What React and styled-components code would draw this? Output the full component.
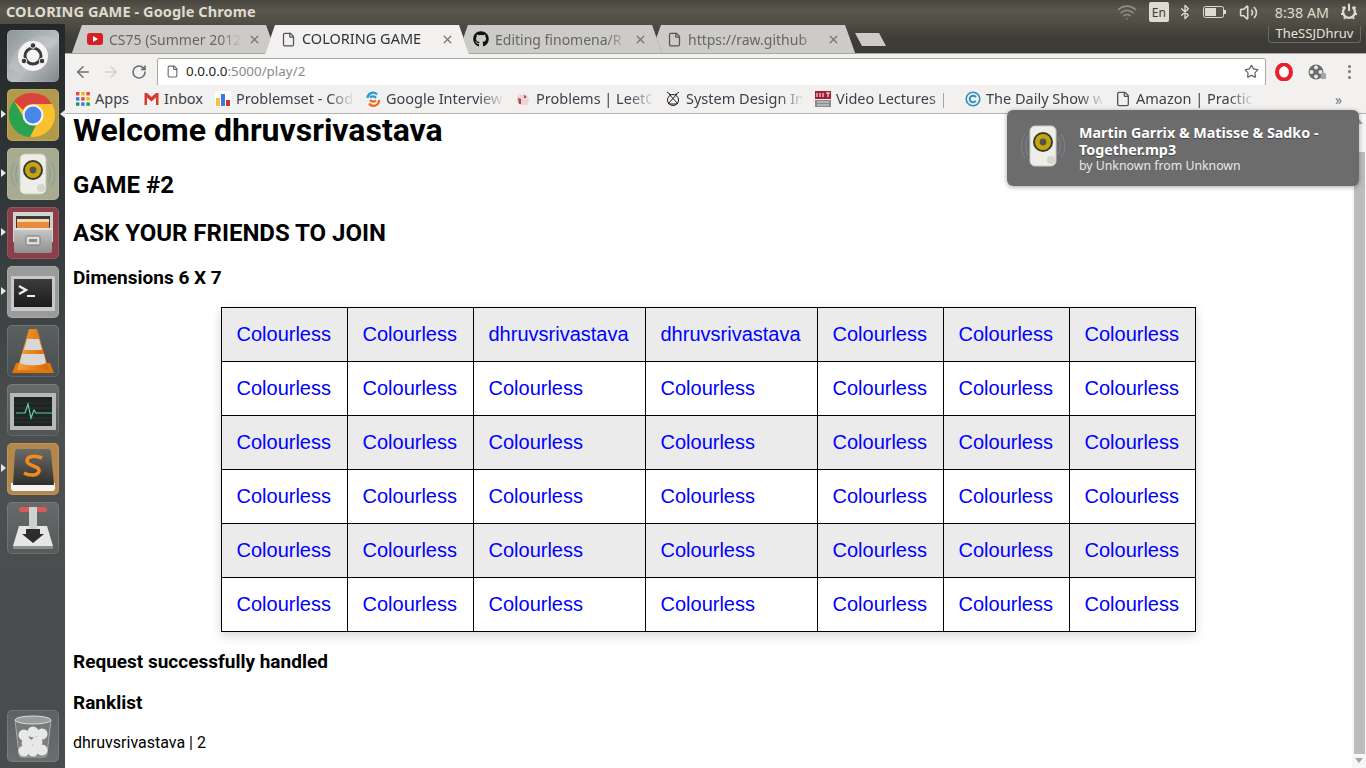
import React from "react";
import styled, { createGlobalStyle } from "styled-components";
import { ArrowLeft, ArrowRight, RotateCw, Star, File, Wifi, Bluetooth, Volume2, X } from "lucide-react";
import { FaGithub } from "react-icons/fa";

const UI_FONT = `"Noto Sans", "Open Sans", sans-serif`;

const GlobalStyle = createGlobalStyle`
  html, body {
    margin: 0;
    padding: 0;
    overflow: hidden;
    background: #fff;
  }
`;

const Screen = styled.div`
  position: relative;
  width: 1366px;
  height: 768px;
  overflow: hidden;
  display: flex;
  flex-direction: column;
  font-family: Roboto, sans-serif;
`;

const TopBar = styled.div`
  height: 24px;
  flex: none;
  display: flex;
  align-items: center;
  padding: 0 8px 0 6px;
  background: linear-gradient(#47453e, #5a574c 10px, #4f4c43);
  color: #dfdbd2;
  font-family: ${UI_FONT};
`;

const WindowTitle = styled.div`
  font-size: 14.5px;
  font-weight: 700;
  letter-spacing: 0.1px;
  flex: 1;
  margin-bottom: 2px;
`;

const Tray = styled.div`
  display: flex;
  align-items: center;
  font-size: 14.3px;
`;

const TraySlot = styled.div`
  display: flex;
  align-items: center;
  margin-left: ${(p) => p.$gap || 0}px;
`;

const LangBox = styled.div`
  width: 20px;
  height: 20px;
  border-radius: 2px;
  background: #dfdbd2;
  color: #3c3b37;
  font-size: 12px;
  display: flex;
  align-items: center;
  justify-content: center;
`;

const Desktop = styled.div`
  flex: 1;
  display: flex;
  min-height: 0;
`;

const Dock = styled.div`
  width: 65px;
  flex: none;
  box-sizing: border-box;
  padding: 6px 0;
  display: flex;
  flex-direction: column;
  align-items: center;
  gap: 7px;
  background: linear-gradient(#24282a, #33383a 25%, #4b4f50 55%, #484c4d 100%);
`;

const Tile = styled.div`
  position: relative;
  width: 52px;
  height: 52px;
  flex: none;
  border-radius: 5px;
  background: ${(p) => p.$bg};
  box-shadow: inset 0 0 0 1px rgba(255, 255, 255, 0.12);
  margin-top: ${(p) => (p.$bottom ? "auto" : "0")};
`;

const Pip = styled.span`
  position: absolute;
  top: 21px;
  left: ${(p) => (p.$side === "right" ? "53px" : "-6px")};
  width: 0;
  height: 0;
  border-top: 4px solid transparent;
  border-bottom: 4px solid transparent;
  ${(p) =>
    p.$side === "right"
      ? "border-right: 5px solid #e8e8e8;"
      : "border-left: 5px solid #e8e8e8;"}
`;

const Main = styled.div`
  flex: 1;
  min-width: 0;
  display: flex;
  flex-direction: column;
`;

const TabStrip = styled.div`
  height: 29px;
  flex: none;
  display: flex;
  align-items: flex-end;
  padding-left: 7px;
  background: linear-gradient(#4f4c43, #3e3d38 14px, #3c3b37);
  font-family: ${UI_FONT};
  position: relative;
`;

const TabEdge = styled.div`
  width: 204px;
  height: ${(p) => (p.$active ? 29 : 28)}px;
  margin-right: -11px;
  margin-bottom: ${(p) => (p.$active ? -1 : 0)}px;
  flex: none;
  position: relative;
  z-index: ${(p) => p.$z};
  filter: drop-shadow(0 0 0.6px #77756f);
`;

const TabBody = styled.div`
  height: 100%;
  box-sizing: border-box;
  padding: 0 15px 0 ${(p) => p.$pad}px;
  display: flex;
  align-items: center;
  gap: 6px;
  font-size: ${(p) => (p.$active ? 14.5 : 14)}px;
  color: ${(p) => (p.$active ? "#333" : "#666")};
  background: ${(p) => (p.$active ? "#f2f1f0" : "#cdcbc8")};
  clip-path: polygon(0 100%, 10px 0, calc(100% - 10px) 0, 100% 100%);
`;

const TabLabel = styled.span`
  flex: 1;
  min-width: 0;
  overflow: hidden;
  white-space: nowrap;
  margin-bottom: ${(p) => (p.$fade ? 0 : 3)}px;
  ${(p) =>
    p.$fade &&
    "mask-image: linear-gradient(to right, #000 calc(100% - 22px), transparent);"}
`;

const NewTab = styled.div`
  width: 31px;
  height: 13px;
  margin: 0 0 7px 11px;
  flex: none;
  background: #cdcbc8;
  clip-path: polygon(0 0, 24px 0, 100% 100%, 7px 100%);
`;

const UserBadge = styled.div`
  position: absolute;
  top: 2px;
  right: 5px;
  width: 93px;
  height: 17px;
  box-sizing: border-box;
  border: 1px solid #6a6963;
  border-top: none;
  border-radius: 0 0 4px 4px;
  color: #e6e3dc;
  font-size: 13px;
  line-height: 15px;
  text-align: center;
`;

const Toolbar = styled.div`
  height: 32px;
  flex: none;
  box-sizing: border-box;
  display: flex;
  align-items: center;
  padding: 4px 0 0 4px;
  background: #f2f1f0;
  border-top: 1px solid #a8a6a2;
`;

const NavButton = styled.div`
  width: 28px;
  height: 24px;
  display: flex;
  align-items: center;
  justify-content: center;
  flex: none;
  color: ${(p) => (p.$off ? "#cfcfcf" : "#6e6e6e")};
`;

const Omnibox = styled.div`
  flex: 1;
  height: 28px;
  box-sizing: border-box;
  margin-left: 4px;
  background: #fff;
  border: 1px solid #aaa9a5;
  border-radius: 2px;
  display: flex;
  align-items: center;
  padding: 0 6px 0 8px;
  gap: 7px;
  font-family: ${UI_FONT};
  font-size: 13.4px;
  color: #8a8a8a;
  b {
    font-weight: 400;
    color: #222;
  }
`;

const Url = styled.div`
  flex: 1;
  margin-bottom: 2px;
`;

const ExtensionTray = styled.div`
  width: 100px;
  flex: none;
  display: flex;
  align-items: center;
  gap: 15px;
  padding-left: 9px;
  box-sizing: border-box;
`;

const Dots = styled.div`
  display: flex;
  flex-direction: column;
  gap: 2.5px;
  margin-left: 7px;
  span {
    width: 3px;
    height: 3px;
    border-radius: 50%;
    background: #777;
  }
`;

const BookmarkBar = styled.div`
  height: 29px;
  flex: none;
  box-sizing: border-box;
  display: flex;
  align-items: center;
  gap: 13px;
  padding: 0 0 0 11px;
  background: #f2f1f0;
  border-bottom: 1px solid #b5b4b0;
  font-family: ${UI_FONT};
  font-size: 14.5px;
  color: #3c4048;
`;

const Bookmark = styled.div`
  display: flex;
  align-items: center;
  gap: 5px;
  flex: none;
`;

const BookmarkLabel = styled.span`
  display: block;
  width: ${(p) => (p.$w ? `${p.$w}px` : "116px")};
  margin-bottom: 2px;
  white-space: nowrap;
  ${(p) =>
    !p.$w && "mask-image: linear-gradient(to right, #000 80%, rgba(0,0,0,0.1));"}
`;

const Chevrons = styled.div`
  margin-left: 70px;
  font-size: 14px;
  color: #777;
`;

const PageRow = styled.div`
  flex: 1;
  min-height: 0;
  display: flex;
  background: #fff;
`;

const Page = styled.div`
  flex: 1;
  min-width: 0;
  box-sizing: border-box;
  padding: 0 8px;
  display: flow-root;
  color: #000;
`;

const Welcome = styled.h1`
  font-size: 32px;
  line-height: 33px;
  font-weight: 700;
  margin: 0 0 24.4px;
`;

const Heading = styled.h2`
  font-size: 24px;
  font-weight: 700;
  margin: 19.5px 0;
`;

const SubHeading = styled.h3`
  font-size: 19px;
  font-weight: 700;
  margin: 18px 0;
`;

const Plain = styled.p`
  font-size: 16px;
  margin: 19px 0;
`;

const Board = styled.table`
  border-collapse: collapse;
  table-layout: fixed;
  width: 974px;
  margin: 18px auto 0;
  font-family: "Liberation Sans", Arial, sans-serif;
  font-size: 20px;
  box-shadow: 0 4px 10px rgba(0, 0, 0, 0.16);
`;

const Column = styled.col`
  width: ${(p) => p.$w}px;
`;

const Row = styled.tr`
  background: ${(p) => (p.$even ? "#ebebeb" : "#fff")};
`;

const Cell = styled.td`
  border: 1px solid #000;
  padding: 0 0 0 14.5px;
  height: 54px;
  box-sizing: border-box;
  white-space: nowrap;
`;

const CellLink = styled.a`
  color: #00f;
  text-decoration: none;
`;

const Scrollbar = styled.div`
  width: 14px;
  flex: none;
  background: #f7f7f7;
  display: flex;
  flex-direction: column;
  align-items: center;
  padding: 5px 0;
  box-sizing: border-box;
`;

const ScrollThumb = styled.div`
  width: 11px;
  flex: 1;
  margin: 28px 0 4px;
  background: #bdbdbd;
`;

const ScrollArrow = styled.span`
  width: 0;
  height: 0;
  border-left: 4px solid transparent;
  border-right: 4px solid transparent;
  ${(p) =>
    p.$down ? "border-top: 5px solid #a5a5a5;" : "border-bottom: 5px solid #a5a5a5;"}
`;

const Notification = styled.div`
  position: absolute;
  left: 1007px;
  top: 110px;
  width: 352px;
  height: 76px;
  box-sizing: border-box;
  padding: 14px 10px 0 72px;
  border-radius: 6px;
  background: rgba(102, 102, 102, 0.96);
  box-shadow: 0 1px 5px rgba(0, 0, 0, 0.35);
  color: #fff;
  font-family: ${UI_FONT};
`;

const NotificationIcon = styled.div`
  position: absolute;
  left: 10px;
  top: 10px;
  width: 52px;
  height: 52px;
`;

const NotificationTitle = styled.div`
  font-size: 14.3px;
  font-weight: 700;
  line-height: 17px;
  text-shadow: 0 1px 1px rgba(0, 0, 0, 0.4);
`;

const NotificationSub = styled.div`
  font-size: 12.3px;
  line-height: 15px;
  color: #e8e8e8;
`;

const UbuntuIcon = () => (
  <svg width="52" height="52" viewBox="0 0 52 52">
    <path d="M6 40C14 10 38 6 48 16" fill="none" stroke="#fff" strokeOpacity=".12" strokeWidth="10" />
    <circle cx="26" cy="26" r="15" fill="#f4f4f4" />
    <circle cx="26" cy="26" r="8" fill="none" stroke="#3a3a3a" strokeWidth="3" />
    <circle cx="26" cy="15.5" r="2.8" fill="#3a3a3a" stroke="#f4f4f4" />
    <circle cx="17" cy="31" r="2.8" fill="#3a3a3a" stroke="#f4f4f4" />
    <circle cx="35" cy="31" r="2.8" fill="#3a3a3a" stroke="#f4f4f4" />
  </svg>
);

const ChromeIcon = () => (
  <svg width="52" height="52" viewBox="0 0 52 52">
    <circle cx="26" cy="26" r="22" fill="#fbc02d" />
    <path d="M26 4a22 22 0 0 1 19 11H26a11 11 0 0 0-10 6L7 12A22 22 0 0 1 26 4z" fill="#d9453a" />
    <path d="M7 12l10 17a11 11 0 0 0 12 7l-6 12A22 22 0 0 1 7 12z" fill="#2aa24f" />
    <circle cx="26" cy="26" r="10.5" fill="#f4f4f4" />
    <circle cx="26" cy="26" r="8.4" fill="#4a86e8" />
  </svg>
);

const SpeakerIcon = () => (
  <svg width="52" height="52" viewBox="0 0 52 52">
    <path d="M8 14c-5 7-5 17 0 24M44 14c5 7 5 17 0 24M11 17c-3 5-3 13 0 18M41 17c3 5 3 13 0 18" fill="none" stroke="#7d8fa6" strokeOpacity=".7" />
    <rect x="13" y="6" width="26" height="40" rx="5" fill="#eeeee9" stroke="#c9c9c2" />
    <circle cx="26" cy="22" r="10" fill="#3a3a30" />
    <circle cx="26" cy="22" r="8" fill="#c5a50f" />
    <circle cx="26" cy="22" r="3.4" fill="#55544a" />
    <circle cx="34" cy="40" r="4" fill="#d6d6d0" />
  </svg>
);

const FilesIcon = () => (
  <svg width="52" height="52" viewBox="0 0 52 52">
    <defs>
      <linearGradient id="drawer" x1="0" y1="0" x2="0" y2="1">
        <stop offset="0" stopColor="#c9c9c7" />
        <stop offset="1" stopColor="#8f8f8d" />
      </linearGradient>
    </defs>
    <rect x="6" y="5" width="40" height="30" fill="#d2d2d0" />
    <rect x="9" y="9" width="34" height="16" fill="#3a3a38" />
    <rect x="10" y="12" width="32" height="3" fill="#f2d9a8" />
    <rect x="10" y="15" width="32" height="6" fill="#e98b3c" />
    <rect x="7" y="21" width="38" height="25" rx="2" fill="url(#drawer)" />
    <rect x="7" y="21" width="38" height="2" fill="#e2e2e0" />
    <rect x="19" y="29" width="14" height="9" rx="1.5" fill="#dededc" stroke="#75756f" />
    <rect x="22" y="32" width="8" height="3" fill="#8a8a86" />
  </svg>
);

const TerminalIcon = () => (
  <svg width="52" height="52" viewBox="0 0 52 52">
    <defs>
      <linearGradient id="term" x1="0" y1="0" x2="0" y2="1">
        <stop offset="0" stopColor="#3c3c3c" />
        <stop offset="1" stopColor="#1c1c1c" />
      </linearGradient>
    </defs>
    <rect x="4" y="10" width="44" height="35" rx="1" fill="#c8c8c8" />
    <rect x="7" y="13" width="38" height="28" fill="url(#term)" />
    <path d="M12 20l7 4-7 4" fill="none" stroke="#eee" strokeWidth="2.4" />
    <rect x="20" y="29" width="8" height="2" fill="#eee" />
  </svg>
);

const VlcIcon = () => (
  <svg width="52" height="52" viewBox="0 0 52 52">
    <defs>
      <linearGradient id="cone" x1="0" y1="0" x2="1" y2="0">
        <stop offset="0" stopColor="#f7a23c" />
        <stop offset="1" stopColor="#d9680a" />
      </linearGradient>
    </defs>
    <path d="M9 38h34l4 10H5z" fill="#e2760d" />
    <path d="M22 4h8l12 41H10z" fill="url(#cone)" />
    <path d="M20 14h12l3 11H17z" fill="#d8d8d8" />
    <path d="M15 29h22l2 9c-5 3-21 3-26 0z" fill="#d8d8d8" />
  </svg>
);

const MonitorIcon = () => (
  <svg width="52" height="52" viewBox="0 0 52 52">
    <rect x="3" y="9" width="46" height="37" fill="#b8b8b6" />
    <rect x="7" y="13" width="38" height="29" fill="#1e2422" />
    <path d="M7 19h38M7 24h38M7 34h38M7 38h38" stroke="#2e3432" />
    <path d="M9 29h9l3-9 3 14 3-8 2 3h17" fill="none" stroke="#5fd0b0" strokeWidth="1.2" />
  </svg>
);

const SublimeIcon = () => (
  <svg width="52" height="52" viewBox="0 0 52 52">
    <defs>
      <linearGradient id="plate" x1="0" y1="0" x2="0" y2="1">
        <stop offset="0" stopColor="#6a6a68" />
        <stop offset="1" stopColor="#2f2f2e" />
      </linearGradient>
    </defs>
    <path d="M4 40h44v5a3 3 0 0 1-3 3H7a3 3 0 0 1-3-3z" fill="#f4f4f2" />
    <path d="M11 6h30a3 3 0 0 1 3 3l3 33H6l2-33a3 3 0 0 1 3-3z" fill="url(#plate)" />
    <path d="M35 15c-7-3-15-2-15 3s13 5 12 10-9 5-15 2" fill="none" stroke="#f28c1e" strokeWidth="3.6" />
  </svg>
);

const InstallIcon = () => (
  <svg width="52" height="52" viewBox="0 0 52 52">
    <rect x="12" y="5" width="28" height="5" rx="2.5" fill="#d85a5c" />
    <path d="M12 24h28l6 20H6z" fill="#e6e6e4" />
    <path d="M6 44h40v3H6z" fill="#8c8c8a" />
    <rect x="22" y="5" width="8" height="24" fill="#d0d0ce" />
    <path d="M19 27h14v5h4l-11 9-11-9h4z" fill="#2c2c2c" />
  </svg>
);

const TrashIcon = () => (
  <svg width="52" height="52" viewBox="0 0 52 52">
    <path d="M8 10l4 34a3 3 0 0 0 3 3h22a3 3 0 0 0 3-3l4-34z" fill="#fff" fillOpacity=".14" stroke="#aaa" />
    <ellipse cx="26" cy="10" rx="18" ry="4" fill="#9a9d9d" stroke="#dcdcdc" />
    {[[17, 25], [26, 22], [35, 24], [20, 33], [30, 32], [17, 41], [26, 41], [35, 40]].map(([x, y]) => (
      <circle key={x * y} cx={x} cy={y} r="5.5" fill="#e8e8e8" />
    ))}
  </svg>
);

const dockItems = [
  { bg: "linear-gradient(135deg,#8d9496,#b9bfc0 55%,#7e8587)", icon: UbuntuIcon },
  { bg: "#b09a4c", icon: ChromeIcon, pips: ["left", "right"] },
  { bg: "#a7ab90", icon: SpeakerIcon, pips: ["left"] },
  { bg: "#8c3e4a", icon: FilesIcon, pips: ["left"] },
  { bg: "#9a9c9c", icon: TerminalIcon, pips: ["left"] },
  { bg: "linear-gradient(#5b6060,#4a4e4f)", icon: VlcIcon },
  { bg: "linear-gradient(#666b6c,#505455)", icon: MonitorIcon },
  { bg: "#b4874c", icon: SublimeIcon, pips: ["left"] },
  { bg: "linear-gradient(#666a6b,#565a5b)", icon: InstallIcon },
];

const GearPower = () => (
  <svg width="18" height="18" viewBox="0 0 18 18" fill="none" stroke="#dfdbd2">
    <path d="M9 1v7" strokeWidth="2" />
    <path d="M5.5 4a6 6 0 1 0 7 0" strokeWidth="2.4" />
    <path d="M9 0.8v2M2.4 4l1.6 1M15.6 4L14 5M1 11h2M15 11h2M4 16l1-1.5M14 16l-1-1.5" strokeWidth="2" />
  </svg>
);

const Battery = () => (
  <svg width="24" height="14" viewBox="0 0 24 14">
    <rect x="0.5" y="1.5" width="20" height="11" rx="2" fill="none" stroke="#dfdbd2" />
    <rect x="2" y="3" width="11" height="8" fill="#dfdbd2" />
    <rect x="21" y="5" width="2" height="4" fill="#dfdbd2" />
  </svg>
);

const Youtube = () => (
  <svg width="16" height="12" viewBox="0 0 16 12" style={{ flex: "none" }}>
    <rect width="16" height="12" rx="3" fill="#d81f26" />
    <path d="M6 3l5 3-5 3z" fill="#fff" />
  </svg>
);

const AppsGrid = () => (
  <svg width="14" height="14" viewBox="0 0 14 14">
    {["#e8453c", "#f4b400", "#e8453c", "#3b78e7", "#e8453c", "#f4b400", "#0f9d58", "#3b78e7", "#0f9d58"].map((c, i) => (
      <rect key={i} x={(i % 3) * 5.2} y={Math.floor(i / 3) * 5.2} width="3.4" height="3.4" fill={c} />
    ))}
  </svg>
);

const Gmail = () => (
  <svg width="15" height="12" viewBox="0 0 14 12">
    <path d="M0 0h2.500L7 4l4.500-4H14v12h-2.500V4.500L7 8.500 2.500 4.500V12H0z" fill="#d8382e" />
  </svg>
);

const Bars = () => (
  <svg width="16" height="16" viewBox="0 0 16 16">
    <rect width="16" height="16" fill="#fff" />
    <rect x="1" y="7" width="4" height="8" fill="#f4c042" />
    <rect x="6" y="3" width="4" height="12" fill="#3b78e7" />
    <rect x="11" y="9" width="4" height="6" fill="#c8352b" />
  </svg>
);

const Swirl = () => (
  <svg width="16" height="16" viewBox="0 0 16 16" fill="none" strokeWidth="2.2">
    <path d="M12 3.500A5.500 5.500 0 0 0 2.500 7" stroke="#1f9bd8" />
    <path d="M5 6.500A4 4 0 0 1 11 7" stroke="#1f9bd8" />
    <path d="M4 12.500A5.500 5.500 0 0 0 14 9" stroke="#f26a1b" />
    <path d="M11 9.500A4 4 0 0 1 5 9" stroke="#f26a1b" />
  </svg>
);

const Leet = () => (
  <svg width="16" height="16" viewBox="0 0 16 16">
    <path d="M2 6l3-3 2 1 2-1 4 2 1 5-2 4H5L2 11z" fill="#ecd5d5" />
    <path d="M3 7l3 1v5H4zM9 4l2 1v2H9z" fill="#b8404a" />
  </svg>
);

const SystemDesign = () => (
  <svg width="16" height="16" viewBox="0 0 16 16" fill="none" stroke="#222" strokeWidth="1">
    <path d="M2 1l4 3M14 1l-4 3M3 13L12 3M13 13L4 3M4 13h8" />
    <circle cx="8" cy="9" r="5.500" />
  </svg>
);

const MitOcw = () => (
  <svg width="16" height="16" viewBox="0 0 16 16">
    <rect width="16" height="8" fill="#a31f34" />
    <rect y="9" width="16" height="7" fill="#8a8a8a" />
    <path d="M2 2v4M5 2v4M8 2v4M11 2h4M13 2v4" stroke="#fff" />
    <path d="M2 11h12M2 14h12" stroke="#ddd" />
  </svg>
);

const DailyShow = () => (
  <svg width="16" height="16" viewBox="0 0 16 16" fill="none" stroke="#2d8fc0">
    <circle cx="8" cy="8" r="6.800" strokeWidth="1.600" />
    <path d="M10.800 6.200a3.300 3.300 0 1 0 0 3.600" strokeWidth="2" />
  </svg>
);

const Opera = () => (
  <svg width="18" height="18" viewBox="0 0 18 18">
    <ellipse cx="9" cy="9" rx="7" ry="7.500" fill="none" stroke="#e8202a" strokeWidth="4" />
    <ellipse cx="9" cy="8.500" rx="3" ry="5.500" fill="#fff" />
  </svg>
);

const FilmReel = () => (
  <svg width="18" height="18" viewBox="0 0 18 18">
    <circle cx="8" cy="9" r="7.500" fill="#6b6b6b" />
    {[[8, 4.500], [8, 13.500], [3.500, 9], [12.500, 9]].map(([x, y]) => (
      <circle key={x + y} cx={x} cy={y} r="2" fill="#e8e8e8" />
    ))}
    <rect x="13" y="10" width="5" height="6" fill="#a5a5a5" />
  </svg>
);

const tabs = [
  { label: "CS75 (Summer 2012", icon: <Youtube />, pad: 15, fade: true },
  { label: "COLORING GAME", icon: <File size={15} color="#555" />, pad: 16, active: true },
  { label: "Editing finomena/R", icon: <FaGithub size={16} color="#111" style={{ flex: "none" }} />, pad: 15, fade: true },
  { label: "https://raw.github", icon: <File size={15} color="#555" style={{ flex: "none" }} />, pad: 16, fade: true },
];

const bookmarks = [
  { label: "Apps", icon: <AppsGrid />, w: 36 },
  { label: "Inbox", icon: <Gmail />, w: 38 },
  { label: "Problemset - Cod", icon: <Bars /> },
  { label: "Google Interview", icon: <Swirl /> },
  { label: "Problems | LeetC", icon: <Leet /> },
  { label: "System Design In", icon: <SystemDesign /> },
  { label: "Video Lectures | I", icon: <MitOcw /> },
  { label: "The Daily Show w", icon: <DailyShow /> },
  { label: "Amazon | Practic", icon: <File size={16} color="#555" /> },
];

const columnWidths = [126, 126, 172, 172, 126, 126, 126];
const header = ["Colourless", "Colourless", "dhruvsrivastava", "dhruvsrivastava", "Colourless", "Colourless", "Colourless"];
const plainRow = Array(7).fill("Colourless");
const rows = [header, plainRow, plainRow, plainRow, plainRow, plainRow];

export default function App() {
  return (
    <Screen>
      <GlobalStyle />
      <TopBar>
        <WindowTitle>COLORING GAME - Google Chrome</WindowTitle>
        <Tray>
          <TraySlot>
            <Wifi size={20} color="#8f8c83" />
          </TraySlot>
          <TraySlot $gap={12}>
            <LangBox>En</LangBox>
          </TraySlot>
          <TraySlot $gap={8}>
            <Bluetooth size={16} color="#dfdbd2" />
          </TraySlot>
          <TraySlot $gap={10}>
            <Battery />
          </TraySlot>
          <TraySlot $gap={12}>
            <Volume2 size={19} color="#dfdbd2" />
          </TraySlot>
          <TraySlot $gap={17}>8:38 AM</TraySlot>
          <TraySlot $gap={11}>
            <GearPower />
          </TraySlot>
        </Tray>
      </TopBar>
      <Desktop>
        <Dock>
          {dockItems.map(({ bg, icon: Icon, pips = [] }, i) => (
            <Tile key={i} $bg={bg}>
              <Icon />
              {pips.map((side) => (
                <Pip key={side} $side={side} />
              ))}
            </Tile>
          ))}
          <Tile $bottom $bg="linear-gradient(#5c6162,#6a6e6f)">
            <TrashIcon />
          </Tile>
        </Dock>
        <Main>
          <TabStrip>
            {tabs.map((tab, i) => (
              <TabEdge key={tab.label} $active={tab.active} $z={tab.active ? 9 : 5 - i}>
                <TabBody $active={tab.active} $pad={tab.pad}>
                  {tab.icon}
                  <TabLabel $fade={tab.fade}>{tab.label}</TabLabel>
                  <X size={13} color="#777" strokeWidth={2.4} style={{ flex: "none" }} />
                </TabBody>
              </TabEdge>
            ))}
            <NewTab />
            <UserBadge>TheSSJDhruv</UserBadge>
          </TabStrip>
          <Toolbar>
            <NavButton>
              <ArrowLeft size={18} />
            </NavButton>
            <NavButton $off>
              <ArrowRight size={18} />
            </NavButton>
            <NavButton>
              <RotateCw size={16} strokeWidth={2.4} />
            </NavButton>
            <Omnibox>
              <File size={13} color="#666" />
              <Url>
                <b>0.0.0.0</b>:5000/play/2
              </Url>
              <Star size={15} color="#666" />
            </Omnibox>
            <ExtensionTray>
              <Opera />
              <FilmReel />
              <Dots>
                <span />
                <span />
                <span />
              </Dots>
            </ExtensionTray>
          </Toolbar>
          <BookmarkBar>
            {bookmarks.map((b) => (
              <Bookmark key={b.label}>
                {b.icon}
                <BookmarkLabel $w={b.w}>{b.label}</BookmarkLabel>
              </Bookmark>
            ))}
            <Chevrons>»</Chevrons>
          </BookmarkBar>
          <PageRow>
            <Page>
              <Welcome>Welcome dhruvsrivastava</Welcome>
              <Heading>GAME #2</Heading>
              <Heading>ASK YOUR FRIENDS TO JOIN</Heading>
              <SubHeading>Dimensions 6 X 7</SubHeading>
              <Board>
                <colgroup>
                  {columnWidths.map((w, i) => (
                    <Column key={i} $w={w} />
                  ))}
                </colgroup>
                <tbody>
                  {rows.map((row, r) => (
                    <Row key={r} $even={r % 2 === 0}>
                      {row.map((name, c) => (
                        <Cell key={c}>
                          <CellLink href="#">{name}</CellLink>
                        </Cell>
                      ))}
                    </Row>
                  ))}
                </tbody>
              </Board>
              <SubHeading>Request successfully handled</SubHeading>
              <SubHeading>Ranklist</SubHeading>
              <Plain>dhruvsrivastava | 2</Plain>
            </Page>
            <Scrollbar>
              <ScrollArrow />
              <ScrollThumb />
              <ScrollArrow $down />
            </Scrollbar>
          </PageRow>
        </Main>
      </Desktop>
      <Notification>
        <NotificationIcon>
          <SpeakerIcon />
        </NotificationIcon>
        <NotificationTitle>Martin Garrix &amp; Matisse &amp; Sadko - Together.mp3</NotificationTitle>
        <NotificationSub>by Unknown from Unknown</NotificationSub>
      </Notification>
    </Screen>
  );
}
